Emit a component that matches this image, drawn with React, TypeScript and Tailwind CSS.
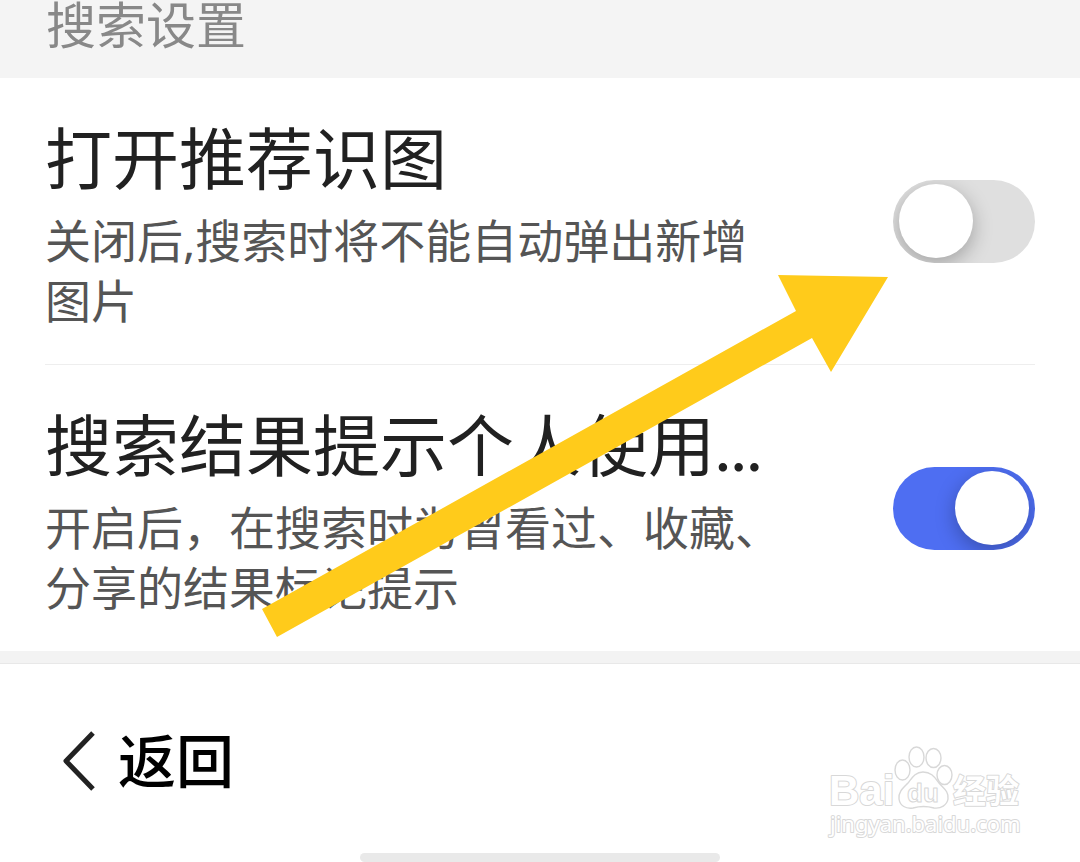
import React, { useId, useState } from 'react';

type SettingRowProps = {
  title: string;
  description: string;
  defaultChecked: boolean;
};

function SettingRow({ title, description, defaultChecked }: SettingRowProps) {
  const id = useId();
  const [checked, setChecked] = useState(defaultChecked);

  return (
    <li className="flex items-center justify-between gap-[106px]">
      <div className="min-w-0 flex-1 pt-[38px] pb-[34px]">
        <label
          htmlFor={id}
          className="block truncate font-[Lato,'Noto_Sans_CJK_SC',sans-serif] text-[67px] leading-[84px] text-[#212121]"
        >
          {title}
        </label>
        <p
          id={`${id}-description`}
          className="mt-[10px] text-[46px] leading-[60px] text-[#555555]"
        >
          {description}
        </p>
      </div>
      <input
        id={id}
        type="checkbox"
        role="switch"
        aria-describedby={`${id}-description`}
        checked={checked}
        onChange={(event) => setChecked(event.target.checked)}
        className="block h-[83px] w-[142px] shrink-0 cursor-pointer appearance-none overflow-hidden rounded-full bg-[#dfdfdf] px-[6px] py-1 before:block before:size-[74px] before:rounded-full before:bg-white before:shadow-[0_6px_20px_rgba(0,0,0,0.28)] checked:bg-[#4e6ef2] checked:before:translate-x-[56px]"
      />
    </li>
  );
}

function Watermark() {
  return (
    <svg
      viewBox="0 0 200 100"
      className="h-[100px] w-[200px]"
      fill="#ffffff"
      stroke="#d8d8d8"
      strokeWidth="2"
      strokeLinejoin="round"
      aria-hidden="true"
    >
      <g className="[paint-order:stroke]">
        <text
          x="3"
          y="63"
          className="font-['Liberation_Sans',sans-serif] text-[42px] font-bold"
        >
          Bai
        </text>
        <text
          x="127"
          y="61"
          className="font-['Noto_Sans_CJK_SC',sans-serif] text-[33px] font-bold"
        >
          经验
        </text>
        <text
          x="4"
          y="90"
          className="font-['Noto_Sans',sans-serif] text-[22px]"
        >
          jingyan.baidu.com
        </text>
      </g>
      <g strokeWidth="1.4">
        <ellipse cx="76.5" cy="28" rx="7.5" ry="10" />
        <ellipse cx="90.5" cy="15" rx="7.5" ry="10" />
        <ellipse cx="107.5" cy="16" rx="7.5" ry="9.5" />
        <ellipse cx="118.5" cy="33" rx="7.5" ry="9.5" />
        <path d="M97 30C89 30 86 36 82 41C77 46 72 50 73 57C74 64 80 67 87 66C94 64 101 64 108 66C115 67 121 63 122 57C123 49 117 46 113 41C109 36 106 30 97 30Z" />
      </g>
      <text
        x="81"
        y="60"
        strokeWidth="1"
        className="font-['Liberation_Sans',sans-serif] text-[26px] font-bold"
      >
        du
      </text>
    </svg>
  );
}

function App() {
  return (
    <div className="relative flex min-h-screen flex-col bg-white font-['Noto_Sans','Noto_Sans_CJK_SC',sans-serif]">
      <header className="bg-[#f4f4f4] px-[46px] pb-6">
        <h1 className="font-[Roboto,'Noto_Sans_CJK_SC',sans-serif] text-[50px] leading-[54px] text-[#888888]">
          搜索设置
        </h1>
      </header>

      <main>
        <ul className="divide-y divide-[#eeeeee] px-[45px]">
          <SettingRow
            title="打开推荐识图"
            description="关闭后,搜索时将不能自动弹出新增图片"
            defaultChecked={false}
          />
          <SettingRow
            title="搜索结果提示个人使用..."
            description="开启后，在搜索时为曾看过、收藏、分享的结果标记提示"
            defaultChecked
          />
        </ul>
      </main>

      <footer className="flex flex-1 flex-col border-t-[12px] border-[#f3f3f3]">
        <div className="flex flex-1 items-center border-t border-[#e8e8e8] pt-1 pl-[60px]">
          <button
            type="button"
            className="flex cursor-pointer items-center gap-5 text-[58px] leading-[80px] font-medium text-black"
          >
            <svg
              viewBox="0 0 38 62"
              className="h-[62px] w-[38px]"
              fill="none"
              stroke="#222222"
              strokeWidth="5"
              strokeLinejoin="round"
              aria-hidden="true"
            >
              <path d="M33 3L6 31L33 59" />
            </svg>
            返回
          </button>
        </div>
        <div className="mx-auto h-[9px] w-1/3 rounded-full bg-[#e9e9e9]" />
      </footer>

      <svg
        viewBox="0 0 626 362"
        className="pointer-events-none absolute top-[275px] left-[262px] h-[362px] w-[626px]"
        fill="#ffcb1b"
        aria-hidden="true"
      >
        <path d="M0 334L534 36L516 0L626 2L569 97L550 63L15 362Z" />
      </svg>

      <div className="pointer-events-none absolute right-[54px] bottom-[20px]">
        <Watermark />
      </div>
    </div>
  );
}

export default App;
